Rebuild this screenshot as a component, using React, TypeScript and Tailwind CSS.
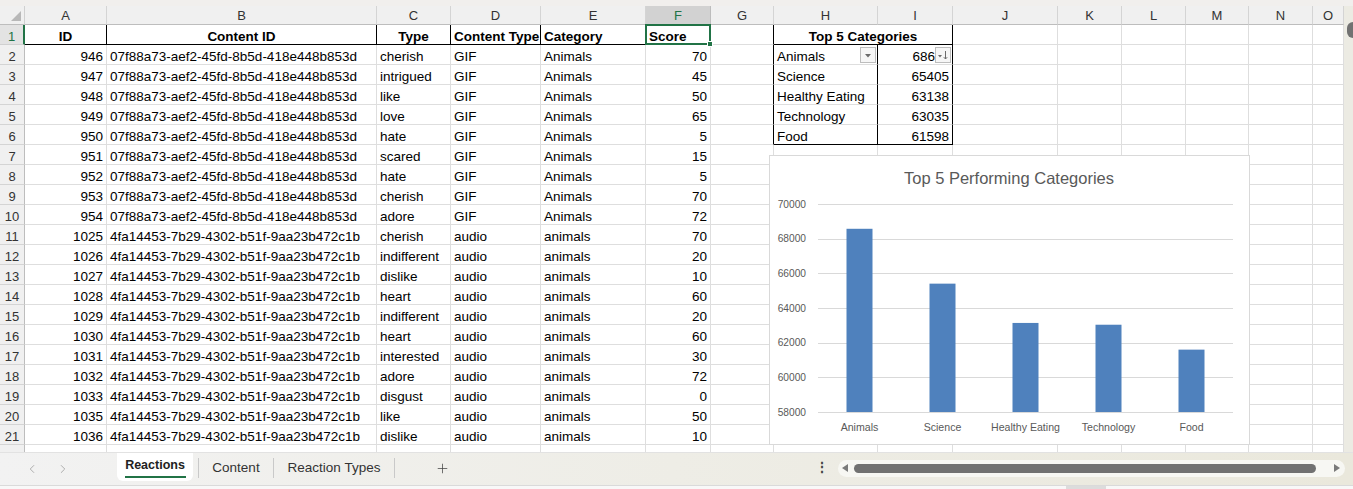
import clsx from 'clsx'
import { ChevronLeft, ChevronRight, Plus } from 'lucide-react'

const GIF_ID = '07f88a73-aef2-45fd-8b5d-418e448b853d'
const AUDIO_ID = '4fa14453-7b29-4302-b51f-9aa23b472c1b'

type Row = [number, string, string, string, string, number]

const reactions: Row[] = [
  [946, GIF_ID, 'cherish', 'GIF', 'Animals', 70],
  [947, GIF_ID, 'intrigued', 'GIF', 'Animals', 45],
  [948, GIF_ID, 'like', 'GIF', 'Animals', 50],
  [949, GIF_ID, 'love', 'GIF', 'Animals', 65],
  [950, GIF_ID, 'hate', 'GIF', 'Animals', 5],
  [951, GIF_ID, 'scared', 'GIF', 'Animals', 15],
  [952, GIF_ID, 'hate', 'GIF', 'Animals', 5],
  [953, GIF_ID, 'cherish', 'GIF', 'Animals', 70],
  [954, GIF_ID, 'adore', 'GIF', 'Animals', 72],
  [1025, AUDIO_ID, 'cherish', 'audio', 'animals', 70],
  [1026, AUDIO_ID, 'indifferent', 'audio', 'animals', 20],
  [1027, AUDIO_ID, 'dislike', 'audio', 'animals', 10],
  [1028, AUDIO_ID, 'heart', 'audio', 'animals', 60],
  [1029, AUDIO_ID, 'indifferent', 'audio', 'animals', 20],
  [1030, AUDIO_ID, 'heart', 'audio', 'animals', 60],
  [1031, AUDIO_ID, 'interested', 'audio', 'animals', 30],
  [1032, AUDIO_ID, 'adore', 'audio', 'animals', 72],
  [1033, AUDIO_ID, 'disgust', 'audio', 'animals', 0],
  [1035, AUDIO_ID, 'like', 'audio', 'animals', 50],
  [1036, AUDIO_ID, 'dislike', 'audio', 'animals', 10],
  [1037, AUDIO_ID, 'dislike', 'audio', 'animals', 10],
]

const topCategories = [
  { name: 'Animals', score: 68570, shown: '686' },
  { name: 'Science', score: 65405, shown: '65405' },
  { name: 'Healthy Eating', score: 63138, shown: '63138' },
  { name: 'Technology', score: 63035, shown: '63035' },
  { name: 'Food', score: 61598, shown: '61598' },
]

const letters = ['A', 'B', 'C', 'D', 'E', 'F', 'G', 'H', 'I', 'J', 'K', 'L', 'M', 'N', 'O']

const gridCols =
  'grid grid-cols-[25px_82px_270px_74px_90px_105px_65px_63px_104px_75px_105px_64px_64px_63px_64px_31px]'

function cellCls(rightBlack: boolean, bottomBlack: boolean, extra?: string) {
  return clsx(
    'h-[20px] border-r border-b overflow-hidden whitespace-nowrap px-[3px] pt-[3px] leading-[17px]',
    rightBlack ? 'border-r-black' : 'border-r-[#dedede]',
    bottomBlack ? 'border-b-black' : 'border-b-[#dedede]',
    extra
  )
}

function FilterButton({ sorted }: { sorted?: boolean }) {
  return (
    <div className="absolute right-[1px] top-[2px] w-[16px] h-[16px] border border-[#bdbdbd] bg-[#f6f6f6] flex items-center justify-center">
      {sorted ? (
        <svg width="12" height="12" viewBox="0 0 12 12">
          <path d="M1 6 L5 6 L3 8.5 Z" fill="#6b6b6b" />
          <path d="M8.5 2 V10 M6.8 8.2 L8.5 10 L10.2 8.2" stroke="#6b6b6b" strokeWidth="1" fill="none" />
        </svg>
      ) : (
        <svg width="10" height="10" viewBox="0 0 10 10">
          <path d="M2 4 L8 4 L5 7.5 Z" fill="#6b6b6b" />
        </svg>
      )}
    </div>
  )
}

function Chart() {
  const ticks = [70000, 68000, 66000, 64000, 62000, 60000, 58000]
  const y = (v: number) => 257 - ((v - 58000) / 2000) * 34.667
  return (
    <div className="absolute left-[769px] top-[149px] w-[481px] h-[290px] bg-white border border-[#d9d9d9]">
      <svg width="479" height="288" className="block" fontFamily="Liberation Sans, Arial, sans-serif">
        <g transform="translate(-1,-1)">
          <text x="240" y="29" textAnchor="middle" fontSize="16.5" fill="#595959">
            Top 5 Performing Categories
          </text>
          {ticks.map((t) => (
            <g key={t}>
              <line x1="49" x2="464" y1={Math.round(y(t)) + 0.5} y2={Math.round(y(t)) + 0.5} stroke="#d9d9d9" />
              <text x="37" y={y(t) + 3.8} textAnchor="end" fontSize="10.2" fill="#595959">
                {t}
              </text>
            </g>
          ))}
          {topCategories.map((c, i) => {
            const cx = 90.5 + i * 83
            return (
              <g key={c.name}>
                <rect x={cx - 13} y={y(c.score)} width="26" height={257 - y(c.score)} fill="#4f81bd" />
                <text x={cx} y="276" textAnchor="middle" fontSize="10.6" fill="#595959">
                  {c.name}
                </text>
              </g>
            )
          })}
        </g>
      </svg>
    </div>
  )
}

function HeaderRow() {
  return (
    <div className={clsx(gridCols, 'h-[19px] bg-[#f0f0f0] text-[13px] text-[#333]')}>
      <div className="relative border-r border-b border-r-[#d0d0d0] border-b-[#bdbdbd]">
        <svg width="10" height="10" className="absolute right-[3px] bottom-[3px]">
          <path d="M10 0 L10 10 L0 10 Z" fill="#b8b8b8" />
        </svg>
      </div>
      {letters.map((l) => (
        <div
          key={l}
          className={clsx(
            'border-r border-b overflow-hidden flex justify-center pt-[2px] leading-[16px]',
            l === 'F'
              ? 'bg-[#d2d2d2] border-r-[#bdbdbd] border-b-[#217346] text-[#217346]'
              : 'border-r-[#d4d4d4] border-b-[#bdbdbd]'
          )}
        >
          <span className={clsx(l === 'O' && 'min-w-[64px] text-center')}>{l}</span>
        </div>
      ))}
    </div>
  )
}

function TitleRow() {
  return (
    <div className={clsx(gridCols, 'font-bold')}>
      <div className="h-[20px] bg-[#e3e3e3] border-r-2 border-r-[#217346] border-b border-b-[#d0d0d0] text-center pt-[3px] leading-[17px] text-[#217346] font-normal text-[13px]">
        1
      </div>
      <div className={cellCls(true, true, 'text-center')}>ID</div>
      <div className={cellCls(true, true, 'text-center')}>Content ID</div>
      <div className={cellCls(true, true, 'text-center')}>Type</div>
      <div className={cellCls(true, true)}>Content Type</div>
      <div className={cellCls(true, true)}>Category</div>
      <div className={cellCls(false, true, 'relative overflow-visible')}>
        Score
        <div className="absolute -left-px -top-px w-[66px] h-[21px] border-2 border-[#217346]" />
        <div className="absolute -right-[3px] -bottom-[3px] w-[6px] h-[6px] bg-[#217346] border border-white" />
      </div>
      <div className={cellCls(true, false)} />
      <div className={cellCls(true, true, 'col-span-2 text-center')}>Top 5 Categories</div>
      {['J', 'K', 'L', 'M', 'N', 'O'].map((k) => (
        <div key={k} className={cellCls(false, false)} />
      ))}
    </div>
  )
}

function DataRow({ n, row }: { n: number; row: Row }) {
  const top = topCategories[n - 2]
  const inTable = n >= 2 && n <= 6
  return (
    <div className={gridCols}>
      <div className="h-[20px] bg-[#f0f0f0] border-r border-b border-r-[#bdbdbd] border-b-[#d4d4d4] text-center pt-[3px] leading-[17px] text-[13px] text-[#333]">
        {n}
      </div>
      <div className={cellCls(false, false, 'text-right')}>{row[0]}</div>
      <div className={cellCls(false, false)}>{row[1]}</div>
      <div className={cellCls(false, false)}>{row[2]}</div>
      <div className={cellCls(false, false)}>{row[3]}</div>
      <div className={cellCls(false, false)}>{row[4]}</div>
      <div className={cellCls(false, false, 'text-right')}>{row[5]}</div>
      <div className={cellCls(inTable, false)} />
      <div className={cellCls(inTable, n === 6, 'relative')}>
        {top?.name}
        {n === 2 && <FilterButton />}
      </div>
      <div className={cellCls(inTable, n === 6, clsx('relative text-right', n === 2 && 'pr-[17px]'))}>
        {top?.shown}
        {n === 2 && <FilterButton sorted />}
      </div>
      {['J', 'K', 'L', 'M', 'N', 'O'].map((k) => (
        <div key={k} className={cellCls(false, false)} />
      ))}
    </div>
  )
}

function TabBar() {
  return (
    <div className="h-[33px] w-[1353px] flex items-stretch border-t border-[#e2e2e2] bg-gradient-to-r from-[#f2f2f2] via-[#eeede6] to-[#eae8dc] text-[13.5px] text-[#333]">
      <div className="w-[117px] shrink-0 flex items-center pl-[25px] gap-[17px] text-[#a3a3a3]">
        <ChevronLeft size={14} strokeWidth={1.5} />
        <ChevronRight size={14} strokeWidth={1.5} />
      </div>
      <div className="w-[76px] shrink-0 mb-[4px] bg-white rounded-b-[6px] flex flex-col items-center justify-center pt-[1px]">
        <span className="font-bold text-[12.5px] text-[#222] leading-[16px]">Reactions</span>
        <span className="mt-[3px] w-[61px] h-[2px] bg-[#217346]" />
      </div>
      <div className="w-[5px] shrink-0" />
      <div className="w-px shrink-0 h-[20px] self-center mb-[2px] bg-[#c9c9c9]" />
      <div className="w-[74px] shrink-0 flex items-center justify-center pb-[2px]">Content</div>
      <div className="w-px shrink-0 h-[20px] self-center mb-[2px] bg-[#c9c9c9]" />
      <div className="w-[120px] shrink-0 flex items-center justify-center pb-[2px]">Reaction Types</div>
      <div className="w-px shrink-0 h-[20px] self-center mb-[2px] bg-[#c9c9c9]" />
      <div className="w-[94px] shrink-0 flex items-center justify-center pb-[2px] text-[#444]">
        <Plus size={15} strokeWidth={1.2} />
      </div>
      <div className="ml-[325px] w-[16px] shrink-0 flex items-center justify-center pb-[2px] text-[#444] font-bold">
        ⋮
      </div>
      <div className="ml-[8px] w-[507px] shrink-0 h-[17px] self-center mb-[2px] rounded-full bg-[#f7f7f3] flex items-center">
        <svg width="6" height="8" className="ml-[4px]">
          <path d="M6 0 L6 8 L0 4 Z" fill="#7a7a7a" />
        </svg>
        <div className="ml-[6px] w-[462px] h-[9px] rounded-full bg-[#717171]" />
        <svg width="6" height="8" className="ml-[18px]">
          <path d="M0 0 L0 8 L6 4 Z" fill="#7a7a7a" />
        </svg>
      </div>
    </div>
  )
}

export default function App() {
  return (
    <div className="w-[1353px] h-[489px] overflow-hidden flex flex-col bg-white font-['Liberation_Sans',Arial,sans-serif] text-[13.5px] text-black">
      <div className="h-[6px] shrink-0 bg-[#f1efed]" />
      <div className="h-[446px] shrink-0 flex">
        <div className="relative w-[1344px] overflow-hidden">
          <HeaderRow />
          <TitleRow />
          {reactions.map((row, i) => (
            <DataRow key={i} n={i + 2} row={row} />
          ))}
          <Chart />
        </div>
        <div className="w-[9px] bg-[#ecebe3] pt-[16px] pl-[3px]">
          <div className="w-[6px] h-[16px] rounded-l-full bg-[#727272]" />
        </div>
      </div>
      <TabBar />
      <div className="flex-1 bg-[#f8f8f8] border-t border-[#dadada] flex">
        <div className="ml-[1066px] w-[40px] h-full bg-[#dcdcdc]" />
      </div>
    </div>
  )
}
